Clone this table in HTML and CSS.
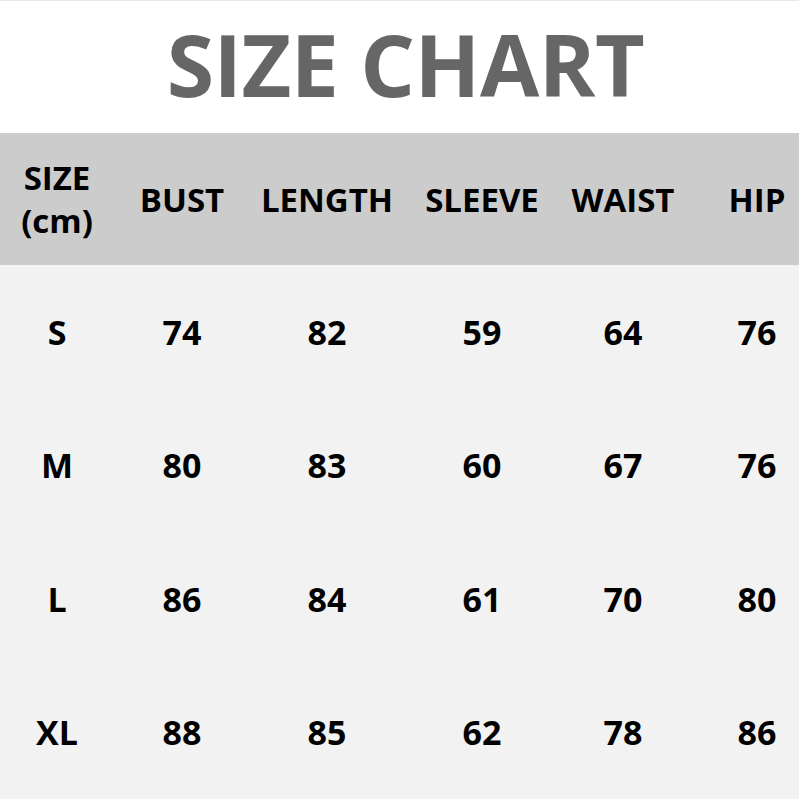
FILE: index.html
```html
<!DOCTYPE html>
<html>
<head>
<meta charset="utf-8">
<link rel="stylesheet" href="styles.css">
</head>
<body>
<div class="page">
  <div class="title">SIZE CHART</div>
  <div class="table">
    <div class="row head">
      <div class="cell">SIZE<br>(cm)</div>
      <div class="cell">BUST</div>
      <div class="cell">LENGTH</div>
      <div class="cell">SLEEVE</div>
      <div class="cell">WAIST</div>
      <div class="cell">HIP</div>
    </div>
    <div class="body">
      <div class="row"><div class="cell">S</div><div class="cell">74</div><div class="cell">82</div><div class="cell">59</div><div class="cell">64</div><div class="cell">76</div></div>
      <div class="row"><div class="cell">M</div><div class="cell">80</div><div class="cell">83</div><div class="cell">60</div><div class="cell">67</div><div class="cell">76</div></div>
      <div class="row"><div class="cell">L</div><div class="cell">86</div><div class="cell">84</div><div class="cell">61</div><div class="cell">70</div><div class="cell">80</div></div>
      <div class="row"><div class="cell">XL</div><div class="cell">88</div><div class="cell">85</div><div class="cell">62</div><div class="cell">78</div><div class="cell">86</div></div>
    </div>
  </div>
</div>
</body>
</html>
```
FILE: styles.css
```css
html, body {
  margin: 0;
  padding: 0;
  background: #ffffff;
  overflow: hidden;
}
.page {
  width: 799px;
  height: 799px;
  overflow: hidden;
  display: flex;
  flex-direction: column;
  font-family: "Open Sans", "Noto Sans", sans-serif;
  font-weight: 700;
  color: #000;
}
.title {
  height: 126px;
  padding-bottom: 6px;
  border-top: 1px solid #e6e6e6;
  display: flex;
  align-items: center;
  justify-content: center;
  font-size: 86px;
  line-height: 1;
  letter-spacing: -0.5px;
  color: #666666;
  padding-left: 12px;
  box-sizing: content-box;
}
.table {
  flex: 1;
  display: flex;
  flex-direction: column;
}
.row {
  display: grid;
  grid-template-columns: 114px 136px 154px 156px 126px 142px;
  width: 828px;
}
.head {
  height: 132px;
  background: #cccccc;
  font-size: 33px;
  line-height: 43px;
}
.body {
  flex: 1;
  background: #f2f2f2;
  display: grid;
  grid-template-rows: repeat(4, 1fr);
  font-size: 34px;
}
.cell {
  display: flex;
  align-items: center;
  justify-content: center;
  text-align: center;
}
```
